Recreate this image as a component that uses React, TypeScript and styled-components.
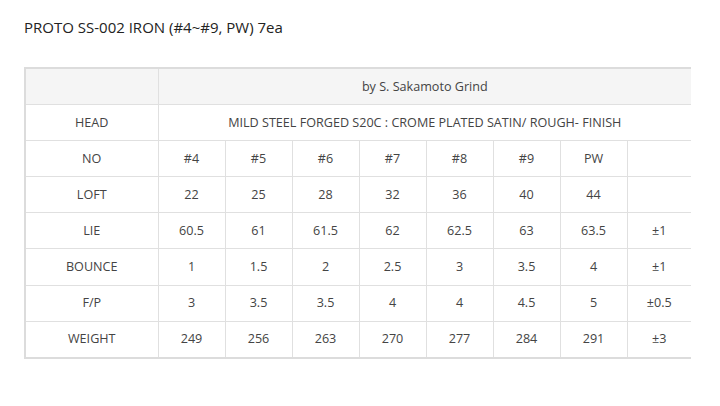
import React from "react";
import styled, { createGlobalStyle } from "styled-components";

const Global = createGlobalStyle`
  html, body { margin: 0; padding: 0; background: #fff; }
  body { font-family: "Open Sans", "Noto Sans", sans-serif; color: #333; }
`;

const Page = styled.div`
  padding: 17px 24px 0 24px;
`;

const Title = styled.h2`
  margin: 0 0 29px 0;
  font-size: 15px;
  font-weight: 400;
  line-height: 21px;
  color: #222;
`;

const Table = styled.table`
  width: 666px;
  table-layout: fixed;
  border-collapse: collapse;
  border-top: 2px solid #dcdcdc;
  border-left: 2px solid #dcdcdc;
  border-bottom: 2px solid #dcdcdc;
  font-size: 12.6px;
  line-height: 16px;
  color: #444;
`;

const Cell = styled.td<{ $shade?: boolean }>`
  height: 35.1px;
  padding: 0;
  text-align: center;
  vertical-align: middle;
  border: 1px solid #e0e0e0;
  background: ${(p) => (p.$shade ? "#f5f5f5" : "#fff")};
  &:last-child { border-right: none; }
`;

const rows: { label: string; values: string[] }[] = [
  { label: "NO", values: ["#4", "#5", "#6", "#7", "#8", "#9", "PW", ""] },
  { label: "LOFT", values: ["22", "25", "28", "32", "36", "40", "44", ""] },
  { label: "LIE", values: ["60.5", "61", "61.5", "62", "62.5", "63", "63.5", "±1"] },
  { label: "BOUNCE", values: ["1", "1.5", "2", "2.5", "3", "3.5", "4", "±1"] },
  { label: "F/P", values: ["3", "3.5", "3.5", "4", "4", "4.5", "5", "±0.5"] },
  { label: "WEIGHT", values: ["249", "256", "263", "270", "277", "284", "291", "±3"] },
];

export default function App() {
  return (
    <Page>
      <Global />
      <Title>PROTO SS-002 IRON (#4~#9, PW) 7ea</Title>
      <Table>
        <colgroup>
          <col style={{ width: 133 }} />
          {[0, 1, 2, 3, 4, 5, 6].map((i) => (
            <col key={i} style={{ width: 67 }} />
          ))}
          <col style={{ width: 64 }} />
        </colgroup>
        <tbody>
          <tr>
            <Cell $shade />
            <Cell $shade colSpan={8}>by S. Sakamoto Grind</Cell>
          </tr>
          <tr>
            <Cell>HEAD</Cell>
            <Cell colSpan={8}>MILD STEEL FORGED S20C : CROME PLATED SATIN/ ROUGH- FINISH</Cell>
          </tr>
          {rows.map((r) => (
            <tr key={r.label}>
              <Cell>{r.label}</Cell>
              {r.values.map((v, i) => (
                <Cell key={i}>{v}</Cell>
              ))}
            </tr>
          ))}
        </tbody>
      </Table>
    </Page>
  );
}
